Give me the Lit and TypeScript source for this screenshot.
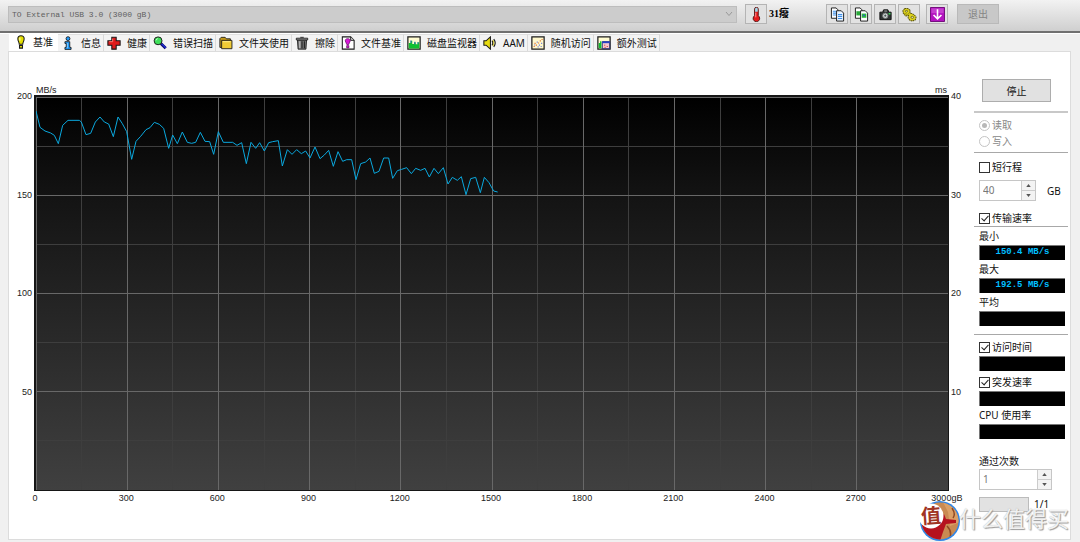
import { LitElement, html, svg, css } from "lit";
import { customElement, property } from "lit/decorators.js";
import { classMap } from "lit/directives/class-map.js";

const ink = "#1a1a1a";

const icons: Record<string, unknown> = {
  bulb: svg`<path d="M8 .8c2.600 0 3.600 1.600 3.600 3.400C11.600 6.800 10.200 8 10 10.500H6C5.800 8 4.400 6.800 4.400 4.200 4.400 2.400 5.400.8 8 .8z" fill="#e6e000" stroke=${ink} stroke-width="1.200"/><path d="M6.700 3v3.500" stroke="#fff"/><path d="M6.300 12h3.400v3H6.300z" fill="#e6e000" stroke=${ink} stroke-width="1.200"/>`,
  info: svg`<circle cx="8" cy="3" r="2.200" fill="#1e9cff" stroke=${ink}/><path d="M4.500 6.500h5.500v6.500h1.500v2.300h-7V13H6V8.500H4.500z" fill="#1e9cff" stroke=${ink}/><path d="M7.300 8v6" stroke="#8fd0ff"/>`,
  cross: svg`<path d="M5.500 1.500h5v4h4.500v5h-4.500v4.500h-5v-4.500H1v-5h4.500z" fill="#e01b1b" stroke=${ink} stroke-width="1.200"/><path d="M6.500 3v3.500H2.500" fill="none" stroke="#ff8a80"/>`,
  search: svg`<path d="M9 8.500l5.500 5.500" stroke="#0a0a6e" stroke-width="3.400"/><path d="M10 9l4.500 4.500" stroke="#2233e0" stroke-width="1.400"/><circle cx="5.800" cy="5.500" r="4.500" fill="#3fe05a" stroke=${ink} stroke-width="1.100"/><path d="M3.500 5a2.500 2.500 0 0 1 2-2" stroke="#d8ffd8" fill="none"/>`,
  folder: svg`<path d="M1 13V3L2.500 1.500h4.500l1.500 1.700h4.500V13z" fill="#c49a18" stroke=${ink}/><path d="M3 14.500V5h11.800v9.500z" fill="#f0cb35" stroke=${ink}/><path d="M4.300 6.500h9" stroke="#fff09a"/>`,
  trash: svg`<path d="M2.800 4.500h10.400l-.7 10.500h-9z" fill="#777" stroke=${ink}/><path d="M1.500 2.500h13v2h-13z" fill="#a8a8a8" stroke=${ink}/><path d="M6 1.500h4" stroke=${ink}/><path d="M5.500 6v8" stroke="#ddd"/><path d="M8 6v8M10.700 6v8" stroke="#222" stroke-width="1.300"/>`,
  filemark: svg`<path d="M1.500 1h9.500l4 4v10h-13.500z" fill="#fff" stroke=${ink} stroke-width="1.200"/><path d="M11 1v4h4" fill="#ccc" stroke=${ink}/><path d="M7.700 3c2 0 3 1.200 2.800 2.700C10.300 7.500 9 8 8.800 9.700H6.600C6.400 8 5.100 7.500 4.900 5.700 4.700 4.200 5.700 3 7.700 3z" fill="#d817d8" stroke="#5d075d" stroke-width=".8"/><path d="M6.500 11h2.500v2.500H6.500z" fill="#d817d8" stroke="#5d075d" stroke-width=".8"/>`,
  bars: svg`<path d="M1 1h14v14H1z" fill="#fffbd0" stroke=${ink} stroke-width="1.400"/><path d="M2 14.200V8h2V5.500h2V9h2V7h2v2.500h2V7h2v7.200z" fill="#10c030"/><path d="M4.500 5v3M9 6.500v3M12.500 7v2" stroke="#3a62d8"/>`,
  speaker: svg`<path d="M1 5.500h2.500L8.500 1v14l-5-4.500H1z" fill="#e8dc10" stroke=${ink} stroke-width="1.200"/><path d="M10.300 5.300q1.800 2.700 0 5.400M12.300 3.500q3.300 4.500 0 9" fill="none" stroke=${ink} stroke-width="1.300"/><path d="M11.300 4.500q2.500 3.500 0 7" fill="none" stroke="#d8c810"/>`,
  scatter: svg`<path d="M1 1h14v14H1z" fill="#fff8cc" stroke=${ink} stroke-width="1.400"/><path d="M3 12h1.300M5.500 10.500h1.300M4 8.500h1.300M8 8h1.300M10 5.500h1.300M12 4h1.300" stroke="#e07030" stroke-width="1.300"/><path d="M3.500 10.300h1.300M6.500 7h1.300M9 10.500h1.300M11.500 8.500h1.300M7.500 12.500h1.300M11 12h1.300" stroke="#6f7fe0" stroke-width="1.300"/>`,
  extra: svg`<path d="M1 1h14v14H1z" fill="#fffbd0" stroke=${ink} stroke-width="1.400"/><path d="M2 14V8h1.500V6H5v8z" fill="#10c030"/><path d="M6 6.500h8.500v8H6z" fill="#f5c8d0" stroke="#10206e"/><path d="M6 7.200h8.500" stroke="#2440c8" stroke-width="2"/><path d="M8 10.500h1.500M11 12h1.500M8.500 13h1.500" stroke="#d04040"/>`,
  thermo: svg`<path d="M5.900 2.300a2 2 0 0 1 4 0v7a3.500 3.500 0 1 1-4 0z" fill="#e41c1c" stroke="#441010" stroke-width=".9"/><path d="M6.500 2.200a1.400 1.400 0 0 1 2.800 0V5H6.500z" fill="#9adcec"/><path d="M7.200 6v5" stroke="#ff9c9c"/>`,
  copy: svg`<path d="M1.500 1h5l2 2v9h-7z" fill="#fff" stroke=${ink}/><path d="M3 4.500h4M3 6.500h4M3 8.500h4" stroke="#3d8ee8" stroke-width="1.200"/><path d="M7 4h5l2.500 2.500V15H7z" fill="#e8f3ff" stroke=${ink}/><path d="M8.500 8h4.500M8.500 10h4.500M8.500 12.300h4.500" stroke="#3d8ee8" stroke-width="1.200"/>`,
  copyimg: svg`<path d="M1.500 1h5l2 2v9h-7z" fill="#fff" stroke=${ink}/><path d="M2.500 4.500h5V9h-5z" fill="#29a83a"/><path d="M7 4h5l2.500 2.500V15H7z" fill="#fff" stroke=${ink}/><path d="M8.200 7h5v4.500h-5z" fill="#29b83a"/><path d="M9.500 9h2" stroke="#3558d8" stroke-width="1.600"/>`,
  camera: svg`<path d="M2 5.500h3L6 3h4.500l1 2.500H14v8H2z" fill="#2e3434" stroke="#111"/><circle cx="7.800" cy="9.300" r="2.800" fill="#d8e2e2" stroke="#777"/><circle cx="7.800" cy="9.300" r="1.200" fill="#4a5454"/><path d="M11.300 7.200h2" stroke="#3ae05a" stroke-width="1.600"/><path d="M6.700 4.300h3" stroke="#aaa"/>`,
  gears: svg`<path d="M3 1.500h3l2.500 2v3l2 .5 2.500 1.200 2 2.500-.8 3-3 1.300-3-1-1.700-2.500.5-2.500-3 .5L1.500 7 1 4z" fill="#ddd31c" stroke="#5a5408" stroke-width="1.100" stroke-dasharray="1.800 .6"/><ellipse cx="4.800" cy="4.500" rx="1.200" ry=".9" fill="#f4f0b0" stroke="#5a5408" stroke-width=".8"/><ellipse cx="11" cy="11" rx="1.400" ry="1.100" fill="#f4f0b0" stroke="#5a5408" stroke-width=".8"/><path d="M2.500 7l3.500.8L8 6.500" fill="none" stroke="#8f880c"/>`,
  down: svg`<path d="M.5.5h15v15H.5z" fill="#b414c0" stroke="#6c0876"/><path d="M1.500 1.500h13v5h-13z" fill="#d25adb" opacity=".6"/><path d="M8 2.500v10M3.800 8.500L8 12.700l4.200-4.200" fill="none" stroke="#fff" stroke-width="1.700"/>`,
};

@customElement("hd-icon")
class HdIcon extends LitElement {
  @property() name = "";
  static styles = css`
    :host { display: block; width: 14px; height: 14px; flex: none; }
    .glyph { display: block; width: 100%; height: 100%; }
  `;
  render() {
    return html`<svg class="glyph" viewBox="0 0 16 16" aria-hidden="true">${icons[this.name]}</svg>`;
  }
}

// Transfer curve; 273.6 units per 300 gB, 295 units per 50 MB/s.
const ORIGIN_X = 108;
const ORIGIN_Y = 33;
const SPAN_X = 2736;
const SPAN_Y = 1179;
const curve =
  "108,75 120,124 135,135 152,141 163,148 175,173 188,118 204,103 238,103 244,108 258,146 272,142 286,108 300,93 313,108 326,114 340,152 354,93 367,113 380,137 395,220 408,166 422,151 438,131 450,125 463,109 478,115 491,127 506,187 518,147 532,173 547,138 562,169 575,172 587,169 601,139 615,166 629,167 641,205 655,137 670,169 698,169 711,178 725,170 739,233 753,169 767,187 779,170 793,195 806,170 818,167 835,164 847,240 862,191 876,205 890,191 904,203 917,195 930,216 945,183 960,218 973,207 986,193 1000,241 1014,197 1028,226 1040,221 1055,221 1068,281 1082,233 1097,228 1110,216 1123,262 1137,256 1151,216 1166,216 1178,277 1192,254 1205,250 1220,245 1234,263 1247,247 1262,253 1275,247 1288,273 1302,247 1315,263 1330,245 1344,294 1357,274 1372,283 1384,272 1398,326 1412,278 1427,274 1441,320 1453,274 1467,290 1481,315 1493,318";

@customElement("hd-chart")
class HdChart extends LitElement {
  static styles = css`
    :host {
      display: grid;
      grid-template-columns: 25px minmax(0, 1fr) 25px;
      grid-template-rows: 10px minmax(0, 1fr) 14px;
      font: 9px/10px "Liberation Sans", Arial, sans-serif;
      color: #222;
    }
    .units { grid-column: 2; display: flex; justify-content: space-between; padding: 0 2px; }
    .axis { grid-row: 2; display: flex; flex-direction: column; justify-content: space-between; margin: -4px 0; }
    .axis span { height: 10px; }
    .left { grid-column: 1; text-align: right; padding-right: 2px; }
    .right { grid-column: 3; padding-left: 2px; }
    .plot {
      grid-column: 2; grid-row: 2; display: block; width: 100%; height: 100%; min-height: 0;
      box-sizing: border-box; border: 2px solid #161616; border-bottom-width: 1px; border-right-width: 1px;
      background: linear-gradient(#000, #141414 26%, #404040);
    }
    .line { fill: none; vector-effect: non-scaling-stroke; stroke-width: 1px; }
    .grid { shape-rendering: crispEdges; }
    .major { stroke: #686868; }
    .minor { stroke: #3e3e3e; }
    .speed { stroke: #0aa8de; stroke-width: 1px; }
    .scale { grid-column: 2; display: flex; justify-content: space-between; padding: 2px 2px 0 1px; }
    .scale span { width: 0; display: flex; justify-content: center; white-space: nowrap; }
  `;
  render() {
    const columns = Array.from({ length: 21 }, (_, i) => i);
    const rows = Array.from({ length: 9 }, (_, i) => i);
    const kind = (i: number) => classMap({ line: true, grid: true, major: i % 2 === 0, minor: i % 2 === 1 });
    const x = (i: number) => ORIGIN_X + (SPAN_X * i) / 20;
    const y = (i: number) => ORIGIN_Y + (SPAN_Y * i) / 8;
    const vertical = (i: number) =>
      svg`<line class=${kind(i)} x1=${x(i)} x2=${x(i)} y1=${ORIGIN_Y} y2=${ORIGIN_Y + SPAN_Y} />`;
    const horizontal = (i: number) =>
      svg`<line class=${kind(i)} x1=${ORIGIN_X} x2=${ORIGIN_X + SPAN_X} y1=${y(i)} y2=${y(i)} />`;
    return html`
      <div class="units"><span>MB/s</span><span>ms</span></div>
      <div class="axis left">${["200", "150", "100", "50", ""].map((t) => html`<span>${t}</span>`)}</div>
      <svg class="plot" viewBox="${ORIGIN_X} ${ORIGIN_Y} ${SPAN_X} ${SPAN_Y}" preserveAspectRatio="none" role="img" aria-label="MB/s">
        ${[1, 0].map((r) => [
          ...columns.filter((i) => i % 2 === r).map(vertical),
          ...rows.filter((i) => i % 2 === r).map(horizontal),
        ])}
        <polyline class="line speed" points=${curve} />
      </svg>
      <div class="axis right">${["40", "30", "20", "10", ""].map((t) => html`<span>${t}</span>`)}</div>
      <div class="scale">
        ${columns.filter((i) => i % 2 === 0).map((i) => html`<span>${i * 150}${i === 20 ? "gB" : ""}</span>`)}
      </div>
    `;
  }
}

const tabs = [
  ["bulb", "基准"], ["info", "信息"], ["cross", "健康"], ["search", "错误扫描"],
  ["folder", "文件夹使用"], ["trash", "擦除"], ["filemark", "文件基准"], ["bars", "磁盘监视器"],
  ["speaker", "AAM"], ["scatter", "随机访问"], ["extra", "额外测试"],
];

@customElement("app-root")
class AppRoot extends LitElement {
  static styles = css`
    :host {
      display: flex; flex-direction: column; height: 100vh; min-height: 520px; position: relative; overflow: hidden;
      background: #f0f0f0; color: #111;
      font: 10px/16px "Noto Sans", "Noto Sans CJK SC", sans-serif;
    }
    * { box-sizing: border-box; }
    button, input, select { font: inherit; color: inherit; margin: 0; padding: 0; border-radius: 0; }

    .toolbar {
      display: flex; align-items: center; height: 33px; flex: none; padding: 0 81px 3px 8px;
      background: linear-gradient(#f2f2f2, #cfcfcf); border-bottom: 2px solid #707070;
    }
    .drive { flex: 1; display: grid; margin-right: 8px; }
    .drive select {
      grid-area: 1 / 1; appearance: none; height: 17px; padding: 0 3px; opacity: 1;
      font: 8px/15px "Liberation Mono", monospace; color: #606060;
      background: #cccccc; border: 1px solid #bdbdbd;
    }
    .chevron { grid-area: 1 / 1; justify-self: end; align-self: center; width: 8px; height: 6px; margin-right: 4px; }
    .tool {
      width: 22px; height: 20px; margin-right: 2px; display: grid; place-items: center;
      background: #e2e2e2; border: 1px solid #b4b4b4;
    }
    .temp { width: 57px; font: bold 10px/16px "Liberation Serif", "Noto Sans CJK SC", serif; color: #000; white-space: nowrap; }
    .gap-before { margin-left: 4px; }
    .tool hd-icon { width: 15px; height: 15px; }
    .exit { width: 42px; height: 20px; margin-left: 7px; background: #c8c8c8; border: 1px solid #b9b9b9; color: #858585; line-height: 16px; }

    .tabs { display: flex; align-items: flex-end; flex: none; height: 18px; padding: 0 9px; border-top: 1px solid #fff; }
    .tab {
      display: flex; align-items: center; gap: 6px; height: 17px; padding: 0 2px 1px 3px; white-space: nowrap;
      background: #f3f3f3; border: 0; border-top: 1px solid #e0e0e0; border-right: 1px solid #dadada;
    }
    .tab.active { padding: 0 4px 3px 5px; gap: 5px; background: #fff; border-color: #fff; }

    .panel {
      flex: 1; min-height: 0; display: flex; margin: 0 9px 2px 8px;
      background: #fff; border: 1px solid #dcdcdc;
    }
    .chart { flex: 1; min-width: 0; margin: 33px 0 34px; }
    .side { width: 96px; flex: none; padding: 27px 2px 0 0; display: flex; flex-direction: column; }
    .group { display: flex; flex-direction: column; padding-left: 5px; }
    .rule { border-top: 1px solid #a8a8a8; }
    .rule.thick { border-top: 2px solid #c8c8c8; margin-top: 9px; padding-top: 4px; }
    .stop { width: 69px; height: 23px; margin-left: 8px; background: #e1e1e1; border: 1px solid #adadad; line-height: 16px; }
    .option { display: flex; align-items: center; gap: 2px; height: 16px; padding-left: 0; white-space: nowrap; }
    .radio { height: 16px; color: #888; }
    .option input { appearance: none; width: 11px; height: 11px; flex: none; background: #fff; border: 1px solid #333; display: grid; place-items: center; }
    .option input[type="radio"] { border-color: #c4c4c4; border-radius: 50%; }
    .option input[type="radio"]:checked::after { content: ""; width: 5px; height: 5px; border-radius: 50%; background: #b8b8b8; }
    .option input[type="checkbox"]:checked::after {
      content: ""; width: 3px; height: 6px; border: solid #222; border-width: 0 1px 1px 0; transform: rotate(42deg); margin-bottom: 2px;
    }
    .label { height: 16px; white-space: nowrap; }
    .value {
      display: block; width: 86px; height: 15px; background: #000; border: 1px solid #777; border-width: 1px 0 0 1px;
      color: #00bfff; font: bold 9px/12px "Liberation Mono", monospace; text-align: center; white-space: pre;
    }
    .value + .label { margin-top: 1px; }
    .label + .value, .option + .value { margin-top: 1px; }
    .spinner { display: flex; height: 21px; width: 57px; border: 1px solid #c6c6c6; background: #fff; }
    .spinner.wide { width: 73px; }
    .spinner input { flex: 1; min-width: 0; border: 0; background: none; padding-left: 3px; color: #777; appearance: textfield; height: 17px; }
    .spinner input::-webkit-inner-spin-button { appearance: none; }
    .arrows { display: flex; flex-direction: column; width: 14px; background: #f0f0f0; border-left: 1px solid #ccc; }
    .arrows button { flex: 1; display: grid; place-items: center; background: #f3f3f3; border: 0; }
    .arrows button + button { border-top: 1px solid #ccc; }
    .arrows svg { width: 5px; height: 3px; display: block; }
    .line { display: flex; align-items: center; }
    .stroke { margin: 5px 0 9px; gap: 11px; }
    .speed { padding-top: 1px; }
    .short { padding-top: 6px; }
    .modes { padding-bottom: 3px; }
    .access { margin-top: 8px; padding-top: 4px; }
    .burst { margin-top: 3px; }
    .passes { margin-top: 14px; }
    .progress { margin-top: 7px; gap: 5px; align-items: flex-start; line-height: 14px; }
    progress { appearance: none; width: 50px; height: 15px; border: 1px solid #bcbcbc; background: #e2e2e2; }
    progress::-webkit-progress-bar { background: #e2e2e2; }

    .watermark { position: absolute; right: 11px; bottom: 0; display: flex; align-items: center; height: 42px; gap: 0; pointer-events: none; }
    .badge { width: 42px; height: 42px; display: block; }
    .stamp { font: bold 20px "Noto Sans CJK SC", sans-serif; fill: #a03424; }
    .brand {
      font: 22px/26px "Noto Sans CJK SC", sans-serif; color: rgba(255, 255, 255, 0.85); margin: 0 0 8px -1px;
      text-shadow: 1px 1px 1px #999, 0 0 1px #aaa; white-space: nowrap;
    }
  `;

  private tool(name: string, label: string, extra = "") {
    return html`<button class="tool ${extra}" aria-label=${label}><hd-icon name=${name}></hd-icon></button>`;
  }

  private spinner(value: number, label: string, wide = false) {
    return html`<span class=${classMap({ spinner: true, wide })}>
      <input type="number" .value=${String(value)} aria-label=${label} disabled />
      <span class="arrows">
        <button aria-label="+" disabled><svg viewBox="0 0 6 4"><path d="M0 4l3-4 3 4z" fill="#555" /></svg></button>
        <button aria-label="-" disabled><svg viewBox="0 0 6 4"><path d="M0 0l3 4 3-4z" fill="#555" /></svg></button>
      </span>
    </span>`;
  }

  render() {
    return html`
      <header class="toolbar">
        <div class="drive">
          <select disabled aria-label="TO External USB 3.0"><option>TO External USB 3.0 (3000 gB)</option></select>
          <svg class="chevron" viewBox="0 0 8 6" aria-hidden="true"><path d="M1 1l3 3.500L7 1" fill="none" stroke="#999" /></svg>
        </div>
        ${this.tool("thermo", "31")}
        <span class="temp">31癈</span>
        ${this.tool("copy", "copy")} ${this.tool("copyimg", "copy image")} ${this.tool("camera", "camera")}
        ${this.tool("gears", "settings")} ${this.tool("down", "save", "gap-before")}
        <button class="exit" disabled>退出</button>
      </header>
      <nav class="tabs" role="tablist">
        ${tabs.map(
          ([icon, text], i) => html`<button role="tab" aria-selected=${i === 0} class=${classMap({ tab: true, active: i === 0 })}>
            <hd-icon name=${icon}></hd-icon><span>${text}</span>
          </button>`
        )}
      </nav>
      <main class="panel">
        <hd-chart class="chart"></hd-chart>
        <aside class="side">
          <button class="stop">停止</button>
          <div class="group rule thick modes">
            <label class="option radio"><input type="radio" name="mode" checked disabled />读取</label>
            <label class="option radio"><input type="radio" name="mode" disabled />写入</label>
          </div>
          <div class="group rule short">
            <label class="option"><input type="checkbox" />短行程</label>
            <div class="line stroke">${this.spinner(40, "短行程")}<span>GB</span></div>
            <label class="option"><input type="checkbox" checked />传输速率</label>
          </div>
          <div class="group rule speed">
            <span class="label">最小</span><output class="value">150.4 MB/s</output>
            <span class="label">最大</span><output class="value">192.5 MB/s</output>
            <span class="label">平均</span><output class="value"></output>
          </div>
          <div class="group rule access">
            <label class="option"><input type="checkbox" checked />访问时间</label><output class="value"></output>
            <label class="option burst"><input type="checkbox" checked />突发速率</label><output class="value"></output>
            <span class="label">CPU 使用率</span><output class="value"></output>
          </div>
          <div class="group passes">
            <span class="label">通过次数</span>
            ${this.spinner(1, "通过次数", true)}
            <div class="line progress"><progress value="0" max="1" aria-label="1/1"></progress><span>1/1</span></div>
          </div>
        </aside>
      </main>
      <div class="watermark">
        <svg class="badge" viewBox="0 0 42 42">
          <defs><clipPath id="disc"><circle cx="22" cy="21" r="18.500" /></clipPath></defs>
          <circle cx="22" cy="21" r="20" fill="#2f86e8" />
          <g clip-path="url(#disc)">
            <path d="M0 0h42v42H0z" fill="#c98a52" />
            <path d="M24 0l6 12 2 14 10-4V0z" fill="#dba066" />
            <path d="M4 24l14-2 5-4 3-4 2 5 10 1v3l-10 1-3 8-4 12H4z" fill="#b5121f" />
            <path d="M29 26q6 6 2 14M34 8q4 6 1 10" fill="none" stroke="#8f4a26" stroke-width="1.500" />
          </g>
          <circle cx="13" cy="16" r="12.500" fill="#fff" />
          <text class="stamp" x="3" y="23" transform="rotate(-4 13 16)">值</text>
        </svg>
        <span class="brand">什么值得买</span>
      </div>
    `;
  }
}
